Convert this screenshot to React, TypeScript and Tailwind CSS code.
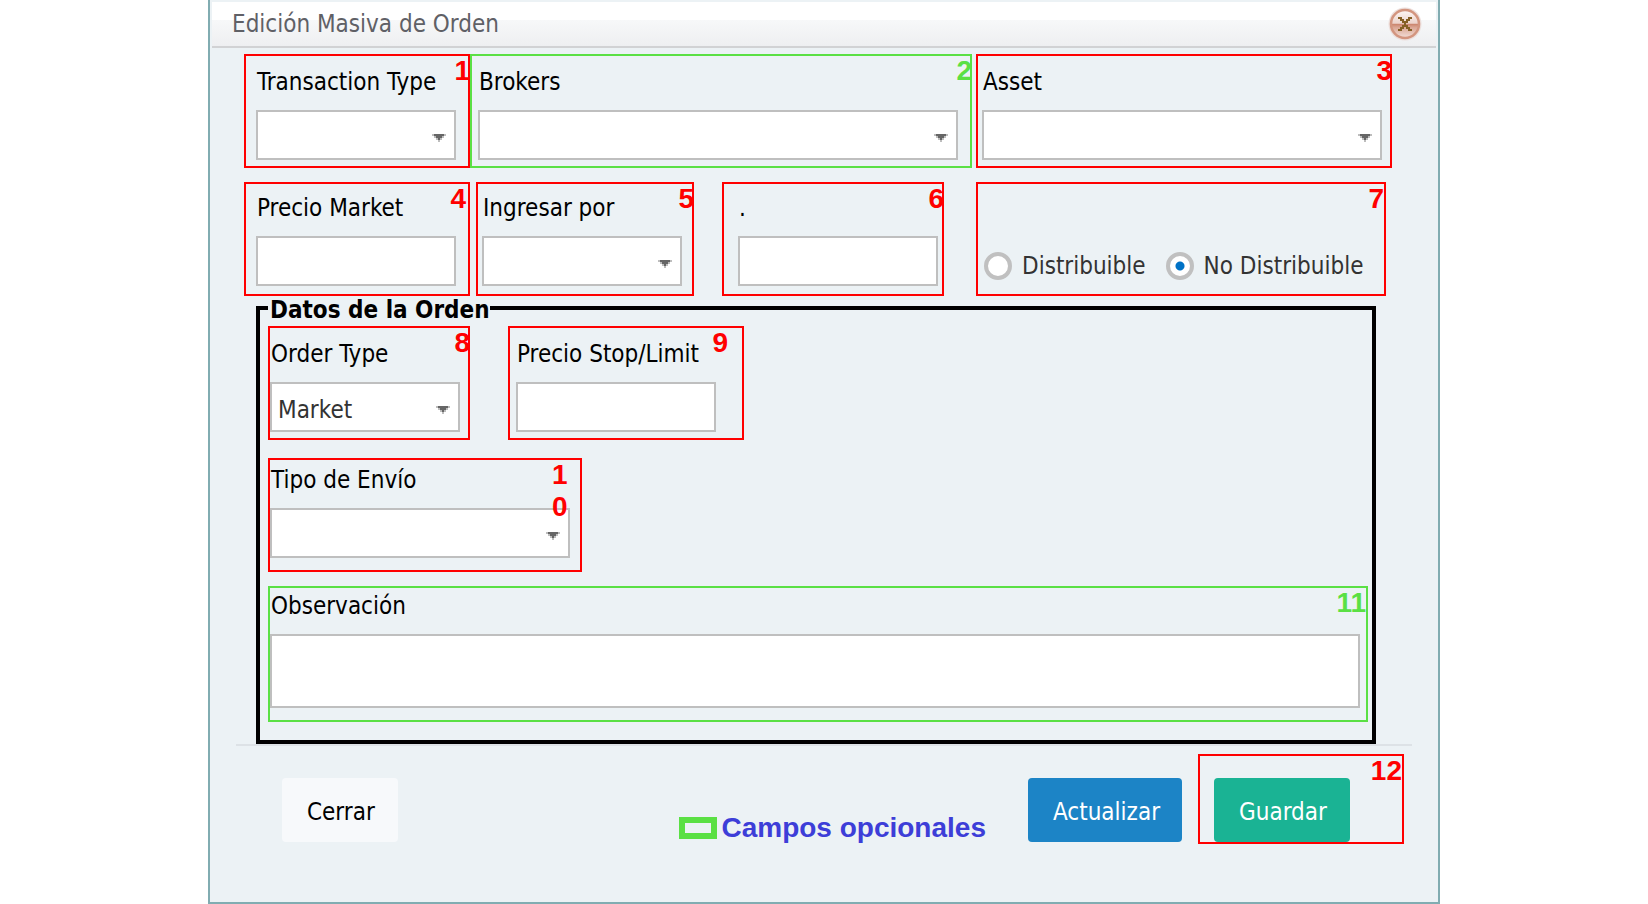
import type { ReactNode } from "react";

const tones = {
  red: { frame: "border-[#ff0000]", text: "text-[#ff0000]" },
  green: { frame: "border-[#5ae044]", text: "text-[#5ae044]" },
};

type Tone = keyof typeof tones;

function Frame({
  tone = "red",
  mark,
  markClass = "-right-0.5",
  className = "",
  children,
}: {
  tone?: Tone;
  mark: string;
  markClass?: string;
  className?: string;
  children: ReactNode;
}) {
  return (
    <div className={`relative min-w-0 border-2 ${tones[tone].frame} ${className}`}>
      {children}
      <span
        className={`pointer-events-none absolute -top-px z-10 font-['Liberation_Sans',sans-serif] text-[28px] leading-8 font-bold ${tones[tone].text} ${markClass}`}
      >
        {mark}
      </span>
    </div>
  );
}

function Label({ htmlFor, children }: { htmlFor: string; children: ReactNode }) {
  return (
    <label htmlFor={htmlFor} className="mb-3 block pl-px leading-8 whitespace-nowrap">
      {children}
    </label>
  );
}

function TextBox({ id }: { id: string }) {
  return (
    <input
      id={id}
      type="text"
      className="block h-[50px] w-full border-2 border-[#bfbfbf] bg-white px-1 text-[#333] outline-none"
    />
  );
}

function Select({ id, options = [""] }: { id: string; options?: string[] }) {
  return (
    <div className="relative">
      <select
        id={id}
        className="block h-[50px] w-full appearance-none border-2 border-[#bfbfbf] bg-white pt-1.5 pr-8 pl-1.5 text-[#333] outline-none"
      >
        {options.map((option) => (
          <option key={option}>{option}</option>
        ))}
      </select>
      <svg
        viewBox="0 0 14 8"
        className="pointer-events-none absolute top-6 right-2.5 h-2 w-3.5"
        aria-hidden="true"
      >
        <path d="M0 0H14V2H12V4H10V6H8V8H6V6H4V4H2V2H0Z" fill="#bdbdbd" />
        <path d="M2 0H12V2H10V4H8V6H6V4H4V2H2Z" fill="#666" />
      </svg>
    </div>
  );
}

function Radio({ label, checked = false }: { label: string; checked?: boolean }) {
  return (
    <label className="flex items-center gap-2.5 leading-7 whitespace-nowrap text-[#333]">
      <input
        type="radio"
        name="distribuible"
        defaultChecked={checked}
        className="size-7 shrink-0 appearance-none rounded-full border-4 border-[#c0c0c0] bg-white checked:bg-[radial-gradient(circle,#0072c6_4px,#fff_5px)]"
      />
      {label}
    </label>
  );
}

function CloseIcon() {
  return (
    <svg viewBox="0 0 34 34" className="size-[34px]" aria-hidden="true">
      <defs>
        <linearGradient id="close-fill" x1="0" y1="0" x2="0" y2="1">
          <stop offset="0" stopColor="#fdf7f5" />
          <stop offset="0.48" stopColor="#ecd3cb" />
          <stop offset="0.49" stopColor="#c98068" />
          <stop offset="0.62" stopColor="#dba694" />
          <stop offset="1" stopColor="#f3e0da" />
        </linearGradient>
      </defs>
      <circle cx="17" cy="17" r="16.500" fill="#ecdfdc" />
      <circle cx="17" cy="17" r="14" fill="url(#close-fill)" stroke="#d3957f" strokeWidth="2.500" />
      <path
        d="M10 10H14V12H16V14H18V12H20V10H24V12H22V14H20V16H18V18H20V20H22V22H24V24H20V22H18V20H16V22H14V24H10V22H12V20H14V18H16V16H14V14H12V12H10Z"
        fill="#855f24"
      />
    </svg>
  );
}

export default function App() {
  return (
    <div className="bg-white font-['DejaVu_Sans_Condensed','DejaVu_Sans',sans-serif] text-[24px] leading-8 text-black">
      <div
        role="dialog"
        aria-labelledby="dialog-title"
        className="mx-52 border-x-2 border-b-2 border-[#81acb1] bg-[#ecf2f5] pt-0.5"
      >
        <header className="mx-0.5 flex h-[46px] items-center justify-between border-b-2 border-[#d1d2d4] bg-[linear-gradient(to_bottom,#fff_0px,#fff_18px,#f7f8f9_18px,#eeeff1_44px)] pr-3.5 pl-5">
          <h1 id="dialog-title" className="text-[#5f6066]">
            Edición Masiva de Orden
          </h1>
          <button type="button" aria-label="Cerrar ventana">
            <CloseIcon />
          </button>
        </header>

        <form onSubmit={(event) => event.preventDefault()}>
          <div className="pt-1.5 pr-[46px] pl-[34px]">
            <div className="grid grid-cols-[226fr_502fr_420fr]">
              <Frame mark="1" className="pt-2.5 pr-3 pb-1.5 pl-2.5">
                <Label htmlFor="transaction-type">Transaction Type</Label>
                <Select id="transaction-type" />
              </Frame>
              <Frame tone="green" mark="2" className="pt-2.5 pr-3 pb-1.5 pl-1.5">
                <Label htmlFor="brokers">Brokers</Label>
                <Select id="brokers" />
              </Frame>
              <Frame mark="3" className="ml-1 pt-2.5 pr-2 pb-1.5 pl-1">
                <Label htmlFor="asset">Asset</Label>
                <Select id="asset" />
              </Frame>
            </div>

            <div className="mt-3.5 grid grid-cols-[226fr_224fr_250fr_448fr]">
              <Frame mark="4" markClass="right-0.5" className="pt-2 pr-3 pb-2 pl-2.5">
                <Label htmlFor="precio-market">Precio Market</Label>
                <TextBox id="precio-market" />
              </Frame>
              <Frame mark="5" className="ml-1.5 pt-2 pr-2.5 pb-2 pl-1">
                <Label htmlFor="ingresar-por">Ingresar por</Label>
                <Select id="ingresar-por" />
              </Frame>
              <Frame mark="6" className="ml-7 pt-2 pr-1 pb-2 pl-3.5">
                <Label htmlFor="valor">.</Label>
                <TextBox id="valor" />
              </Frame>
              <Frame mark="7" markClass="right-0" className="mr-1.5 ml-8 flex items-end pb-3.5 pl-1.5">
                <div role="radiogroup" aria-label="Distribución" className="flex gap-5">
                  <Radio label="Distribuible" />
                  <Radio label="No Distribuible" checked />
                </div>
              </Frame>
            </div>
          </div>

          <fieldset className="-mt-0.5 mr-[62px] ml-[46px] border-4 border-black pt-1 pr-1 pb-[18px] pl-2">
            <legend className="pt-1 pl-0.5 leading-6 font-bold">Datos de la Orden</legend>
            <div className="grid grid-cols-[202fr_274fr_624fr]">
              <Frame mark="8" className="pt-2.5 pr-2 pb-1.5">
                <Label htmlFor="order-type">Order Type</Label>
                <Select id="order-type" options={["Market"]} />
              </Frame>
              <Frame mark="9" markClass="right-3.5" className="ml-[38px] pt-2.5 pr-[26px] pb-1.5 pl-1.5">
                <Label htmlFor="precio-stop">Precio Stop/Limit</Label>
                <TextBox id="precio-stop" />
              </Frame>
            </div>
            <div className="mt-[18px] grid grid-cols-[314fr_786fr]">
              <Frame mark="10" markClass="right-3 w-4 break-all" className="pt-1 pr-2.5 pb-3">
                <Label htmlFor="tipo-envio">Tipo de Envío</Label>
                <Select id="tipo-envio" />
              </Frame>
            </div>
            <Frame tone="green" mark="11" markClass="right-0" className="mt-3.5 pt-0.5 pr-1.5 pb-3">
              <Label htmlFor="observacion">Observación</Label>
              <textarea
                id="observacion"
                className="block h-[74px] w-full resize-none border-2 border-[#bfbfbf] bg-white px-1 text-[#333] outline-none"
              />
            </Frame>
          </fieldset>

          <hr className="mx-[26px] border-t-2 border-[#dde2e6]" />

          <footer className="flex items-end pt-2 pr-[34px] pb-[58px] pl-[72px]">
            <button type="button" className="mb-0.5 h-16 rounded bg-[#f7f9fb] pt-1 pr-[23px] pl-[25px]">
              Cerrar
            </button>
            <p className="mr-[42px] ml-auto flex items-center gap-1 font-['Liberation_Sans',sans-serif] text-[28px] leading-8 font-bold whitespace-nowrap text-[#3d3ed8]">
              <span className="h-[22px] w-[38px] border-6 border-[#5ae044]" />
              Campos opcionales
            </p>
            <button type="button" className="mr-4 mb-0.5 h-16 rounded bg-[#1c84c6] pt-1 pr-[22px] pl-[25px] text-white">
              Actualizar
            </button>
            <Frame mark="12" markClass="right-0" className="w-[206px] pt-[22px] pl-3.5">
              <button type="submit" className="block h-16 rounded bg-[#1ab394] pt-1 pr-[23px] pl-[25px] text-white">
                Guardar
              </button>
            </Frame>
          </footer>
        </form>
      </div>
    </div>
  );
}
